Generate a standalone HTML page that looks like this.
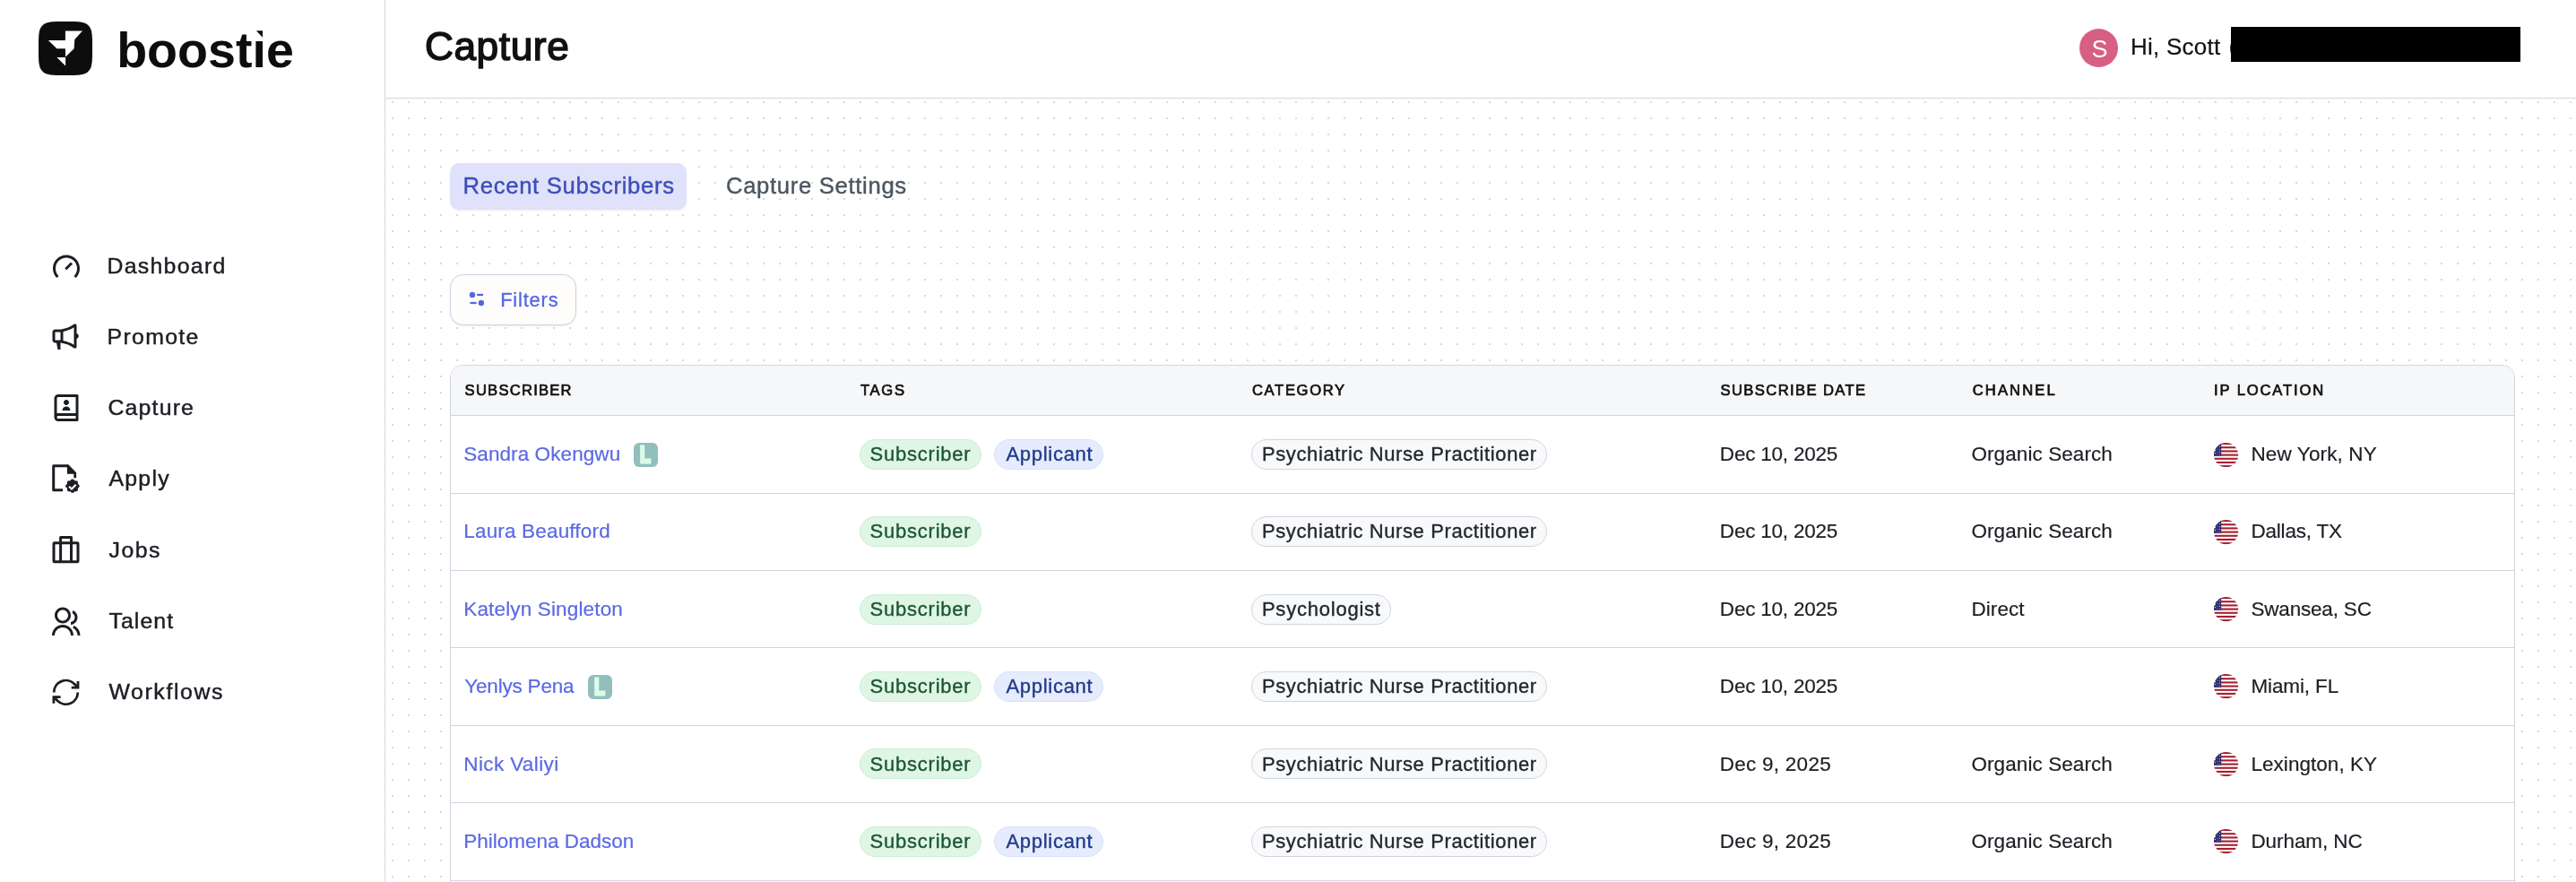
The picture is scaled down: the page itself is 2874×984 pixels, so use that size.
<!DOCTYPE html>
<html lang="en">
<head>
<meta charset="utf-8">
<title>Capture - boostie</title>
<style>
html,body{margin:0;padding:0;background:#fff;}
body{width:2874px;height:984px;overflow:hidden;position:relative;font-family:"Liberation Sans",sans-serif;}
.t{position:absolute;white-space:nowrap;line-height:1;display:block;}
svg{position:absolute;overflow:visible;}
#dots{left:430px;top:110px;}
#sidebar{position:absolute;left:0;top:0;width:429px;height:984px;background:#fff;border-right:1px solid #d6d8df;}
#header{position:absolute;left:430px;top:0;width:2444px;height:109px;background:#fff;border-bottom:1px solid #d4d7de;}
#avatar{position:absolute;left:2320px;top:32px;width:43px;height:43px;border-radius:50%;background:#d65f82;}
#redact{position:absolute;left:2489px;top:30px;width:323px;height:39px;background:#000;}
#tab1{position:absolute;left:502px;top:182px;width:264px;height:52px;border-radius:10.5px;background:#dfe2fa;box-shadow:0 1px 2px rgba(60,70,140,.10);}
#filters{position:absolute;left:502px;top:306px;width:139px;height:55px;border:1px solid #cdd0db;border-radius:14.5px;background:#fefdfb;box-shadow:0 1px 2px rgba(40,50,90,.08);}
#table{position:absolute;left:502px;top:407px;width:2302px;height:600px;border:1px solid #d1d5dc;border-radius:14px 14px 0 0;background:#fff;overflow:hidden;}
#thead{position:absolute;left:0;top:0;width:100%;height:55px;background:#f6f7f9;border-bottom:1px solid #d1d5dc;}
.rl{position:absolute;left:0;width:100%;height:1px;background:#d2d5dd;}
.pill{position:absolute;box-sizing:border-box;height:34px;border-radius:17px;border:1px solid;}
.pill.g{background:#dff6e4;border-color:#ccefd5;}
.pill.b{background:#e6ecfd;border-color:#d6e1fb;}
.pill.c{background:#f8f9fb;border-color:#d2d5dc;}
.lb{position:absolute;width:27px;height:27px;border-radius:6px;background:#92bfbd;}
</style>
</head>
<body>
<div id="layer" style="position:absolute;left:0;top:0;width:2874px;height:984px;will-change:transform;">
<svg width="0" height="0" style="left:-10px;top:-10px">
 <defs>
  <pattern id="dp" x="7" y="3" width="18" height="18" patternUnits="userSpaceOnUse"><rect x="0" y="0" width="2" height="2" fill="#d6d8e0"/></pattern>
  <clipPath id="fc"><circle cx="13.6" cy="13.6" r="13.6"/></clipPath>
  <g id="us" clip-path="url(#fc)">
   <rect width="27.2" height="27.2" fill="#fff"/>
   <g fill="#a51f30">
    <rect y="0" width="28" height="2.09"/><rect y="4.18" width="28" height="2.09"/><rect y="8.37" width="28" height="2.09"/>
    <rect y="12.55" width="28" height="2.09"/><rect y="16.74" width="28" height="2.09"/><rect y="20.92" width="28" height="2.09"/><rect y="25.1" width="28" height="2.1"/>
   </g>
   <rect width="8.2" height="14.8" fill="#2b2f6c"/>
   <g fill="#fff"><circle cx="6.3" cy="1.6" r=".55"/><circle cx="3.3" cy="4.2" r=".5"/><circle cx="6.3" cy="4.6" r=".5"/><circle cx="1.5" cy="8.6" r=".55"/><circle cx="4" cy="7" r=".45"/><circle cx="6.4" cy="7.7" r=".5"/><circle cx="1.6" cy="11.6" r=".55"/><circle cx="4" cy="10.2" r=".45"/><circle cx="6.4" cy="10.6" r=".5"/><circle cx="4" cy="13" r=".45"/><circle cx="6.4" cy="13.2" r=".45"/></g>
  </g>
 </defs>
</svg>

<main>
<svg id="dots" width="2444" height="874"><rect width="2444" height="874" fill="url(#dp)"/></svg>
<div id="tab1"></div>
<div id="filters"></div>
<svg style="left:520px;top:322px" width="24" height="24" viewBox="520 322 24 24" fill="#5466e2"><circle cx="527" cy="329" r="3.2"/><rect x="532.1" y="327.8" width="6.9" height="2.2"/><rect x="524.5" y="336.9" width="7.2" height="2.2"/><circle cx="536.9" cy="338" r="3.2"/></svg>
<span class="t" style="left:516.55px;top:195.00px;font-size:25.7px;letter-spacing:0.664px;color:#3f4db8;-webkit-text-stroke:0.4px #3f4db8;">Recent Subscribers</span>
<span class="t" style="left:809.95px;top:195.00px;font-size:25.7px;letter-spacing:0.660px;color:#4b5560;-webkit-text-stroke:0.4px #4b5560;">Capture Settings</span>
<span class="t" style="left:558.20px;top:324.00px;font-size:21.9px;letter-spacing:0.809px;color:#5466e2;-webkit-text-stroke:0.3px #5466e2;">Filters</span>
<div id="table"><div id="thead"></div>
<div class="rl" style="top:142px"></div><div class="rl" style="top:228px"></div><div class="rl" style="top:314px"></div><div class="rl" style="top:401px"></div><div class="rl" style="top:487px"></div><div class="rl" style="top:574px"></div>
</div>
<div class="lb" style="left:707.0px;top:494.0px"></div>
<div class="pill g" style="left:959px;top:489.8px;width:136px"></div>
<div class="pill b" style="left:1109px;top:489.8px;width:122px"></div>
<div class="pill c" style="left:1396px;top:489.8px;width:330.1px"></div>
<svg class="flag" style="left:2470px; top:493.9px" width="27.2" height="27.2" viewBox="0 0 27.2 27.2"><use href="#us"/></svg>
<div class="pill g" style="left:959px;top:576.2px;width:136px"></div>
<div class="pill c" style="left:1396px;top:576.2px;width:330.1px"></div>
<svg class="flag" style="left:2470px; top:579.9px" width="27.2" height="27.2" viewBox="0 0 27.2 27.2"><use href="#us"/></svg>
<div class="pill g" style="left:959px;top:662.6px;width:136px"></div>
<div class="pill c" style="left:1396px;top:662.6px;width:156.1px"></div>
<svg class="flag" style="left:2470px; top:665.9px" width="27.2" height="27.2" viewBox="0 0 27.2 27.2"><use href="#us"/></svg>
<div class="lb" style="left:656.0px;top:753.2px"></div>
<div class="pill g" style="left:959px;top:749.0px;width:136px"></div>
<div class="pill b" style="left:1109px;top:749.0px;width:122px"></div>
<div class="pill c" style="left:1396px;top:749.0px;width:330.1px"></div>
<svg class="flag" style="left:2470px; top:751.9px" width="27.2" height="27.2" viewBox="0 0 27.2 27.2"><use href="#us"/></svg>
<div class="pill g" style="left:959px;top:835.4px;width:136px"></div>
<div class="pill c" style="left:1396px;top:835.4px;width:330.1px"></div>
<svg class="flag" style="left:2470px; top:838.9px" width="27.2" height="27.2" viewBox="0 0 27.2 27.2"><use href="#us"/></svg>
<div class="pill g" style="left:959px;top:921.8px;width:136px"></div>
<div class="pill b" style="left:1109px;top:921.8px;width:122px"></div>
<div class="pill c" style="left:1396px;top:921.8px;width:330.1px"></div>
<svg class="flag" style="left:2470px; top:924.9px" width="27.2" height="27.2" viewBox="0 0 27.2 27.2"><use href="#us"/></svg>
<span class="t" style="left:518.60px;top:428.00px;font-size:16.6px;letter-spacing:1.233px;color:#111111;-webkit-text-stroke:0.7px #111;">SUBSCRIBER</span>
<span class="t" style="left:960.00px;top:428.00px;font-size:16.6px;letter-spacing:1.674px;color:#111111;-webkit-text-stroke:0.7px #111;">TAGS</span>
<span class="t" style="left:1397.00px;top:428.00px;font-size:16.6px;letter-spacing:1.640px;color:#111111;-webkit-text-stroke:0.7px #111;">CATEGORY</span>
<span class="t" style="left:1919.50px;top:428.00px;font-size:16.6px;letter-spacing:1.395px;color:#111111;-webkit-text-stroke:0.7px #111;">SUBSCRIBE DATE</span>
<span class="t" style="left:2200.70px;top:428.00px;font-size:16.6px;letter-spacing:2.122px;color:#111111;-webkit-text-stroke:0.7px #111;">CHANNEL</span>
<span class="t" style="left:2470.10px;top:428.00px;font-size:16.6px;letter-spacing:1.860px;color:#111111;-webkit-text-stroke:0.7px #111;">IP LOCATION</span>
<span class="t" style="left:517.25px;top:496.00px;font-size:22.5px;letter-spacing:0.081px;color:#5b69e3;-webkit-text-stroke:0.2px #5b69e3;">Sandra Okengwu</span>
<span class="t" style="left:713.90px;top:495.00px;font-size:25.7px;letter-spacing:0.000px;color:#dcfce7;font-weight:700;transform:scaleX(0.753);transform-origin:-0.50px 50%;-webkit-text-stroke:3px #dcfce7;">L</span>
<span class="t" style="left:970.54px;top:496.00px;font-size:22.0px;letter-spacing:0.777px;color:#1e5734;-webkit-text-stroke:0.38px #1e5734;">Subscriber</span>
<span class="t" style="left:1122.44px;top:496.00px;font-size:22.0px;letter-spacing:0.716px;color:#223c8a;-webkit-text-stroke:0.38px #223c8a;">Applicant</span>
<span class="t" style="left:1407.93px;top:496.00px;font-size:22.0px;letter-spacing:0.611px;color:#23272e;-webkit-text-stroke:0.36px #23272e;">Psychiatric Nurse Practitioner</span>
<span class="t" style="left:1918.85px;top:496.00px;font-size:22.5px;letter-spacing:-0.212px;color:#1c1f24;-webkit-text-stroke:0.2px #1c1f24;">Dec 10, 2025</span>
<span class="t" style="left:2199.45px;top:496.00px;font-size:22.5px;letter-spacing:0.084px;color:#1c1f24;-webkit-text-stroke:0.2px #1c1f24;">Organic Search</span>
<span class="t" style="left:2511.45px;top:496.00px;font-size:22.5px;letter-spacing:0.135px;color:#1c1f24;-webkit-text-stroke:0.2px #1c1f24;">New York, NY</span>
<span class="t" style="left:517.25px;top:582.00px;font-size:22.5px;letter-spacing:0.175px;color:#5b69e3;-webkit-text-stroke:0.2px #5b69e3;">Laura Beaufford</span>
<span class="t" style="left:970.54px;top:582.00px;font-size:22.0px;letter-spacing:0.777px;color:#1e5734;-webkit-text-stroke:0.38px #1e5734;">Subscriber</span>
<span class="t" style="left:1407.93px;top:582.00px;font-size:22.0px;letter-spacing:0.611px;color:#23272e;-webkit-text-stroke:0.36px #23272e;">Psychiatric Nurse Practitioner</span>
<span class="t" style="left:1918.85px;top:582.00px;font-size:22.5px;letter-spacing:-0.212px;color:#1c1f24;-webkit-text-stroke:0.2px #1c1f24;">Dec 10, 2025</span>
<span class="t" style="left:2199.45px;top:582.00px;font-size:22.5px;letter-spacing:0.084px;color:#1c1f24;-webkit-text-stroke:0.2px #1c1f24;">Organic Search</span>
<span class="t" style="left:2511.45px;top:582.00px;font-size:22.5px;letter-spacing:-0.197px;color:#1c1f24;-webkit-text-stroke:0.2px #1c1f24;">Dallas, TX</span>
<span class="t" style="left:517.25px;top:669.00px;font-size:22.5px;letter-spacing:0.156px;color:#5b69e3;-webkit-text-stroke:0.2px #5b69e3;">Katelyn Singleton</span>
<span class="t" style="left:970.54px;top:669.00px;font-size:22.0px;letter-spacing:0.777px;color:#1e5734;-webkit-text-stroke:0.38px #1e5734;">Subscriber</span>
<span class="t" style="left:1407.93px;top:669.00px;font-size:22.0px;letter-spacing:0.777px;color:#23272e;-webkit-text-stroke:0.36px #23272e;">Psychologist</span>
<span class="t" style="left:1918.85px;top:669.00px;font-size:22.5px;letter-spacing:-0.212px;color:#1c1f24;-webkit-text-stroke:0.2px #1c1f24;">Dec 10, 2025</span>
<span class="t" style="left:2199.45px;top:669.00px;font-size:22.5px;letter-spacing:0.079px;color:#1c1f24;-webkit-text-stroke:0.2px #1c1f24;">Direct</span>
<span class="t" style="left:2511.45px;top:669.00px;font-size:22.5px;letter-spacing:-0.187px;color:#1c1f24;-webkit-text-stroke:0.2px #1c1f24;">Swansea, SC</span>
<span class="t" style="left:518.25px;top:755.00px;font-size:22.5px;letter-spacing:-0.195px;color:#5b69e3;-webkit-text-stroke:0.2px #5b69e3;">Yenlys Pena</span>
<span class="t" style="left:662.90px;top:754.00px;font-size:25.7px;letter-spacing:0.000px;color:#dcfce7;font-weight:700;transform:scaleX(0.753);transform-origin:-0.50px 50%;-webkit-text-stroke:3px #dcfce7;">L</span>
<span class="t" style="left:970.54px;top:755.00px;font-size:22.0px;letter-spacing:0.777px;color:#1e5734;-webkit-text-stroke:0.38px #1e5734;">Subscriber</span>
<span class="t" style="left:1122.44px;top:755.00px;font-size:22.0px;letter-spacing:0.716px;color:#223c8a;-webkit-text-stroke:0.38px #223c8a;">Applicant</span>
<span class="t" style="left:1407.93px;top:755.00px;font-size:22.0px;letter-spacing:0.611px;color:#23272e;-webkit-text-stroke:0.36px #23272e;">Psychiatric Nurse Practitioner</span>
<span class="t" style="left:1918.85px;top:755.00px;font-size:22.5px;letter-spacing:-0.212px;color:#1c1f24;-webkit-text-stroke:0.2px #1c1f24;">Dec 10, 2025</span>
<span class="t" style="left:2511.45px;top:755.00px;font-size:22.5px;letter-spacing:-0.130px;color:#1c1f24;-webkit-text-stroke:0.2px #1c1f24;">Miami, FL</span>
<span class="t" style="left:517.25px;top:842.00px;font-size:22.5px;letter-spacing:0.380px;color:#5b69e3;-webkit-text-stroke:0.2px #5b69e3;">Nick Valiyi</span>
<span class="t" style="left:970.54px;top:842.00px;font-size:22.0px;letter-spacing:0.777px;color:#1e5734;-webkit-text-stroke:0.38px #1e5734;">Subscriber</span>
<span class="t" style="left:1407.93px;top:842.00px;font-size:22.0px;letter-spacing:0.611px;color:#23272e;-webkit-text-stroke:0.36px #23272e;">Psychiatric Nurse Practitioner</span>
<span class="t" style="left:1918.85px;top:842.00px;font-size:22.5px;letter-spacing:0.248px;color:#1c1f24;-webkit-text-stroke:0.2px #1c1f24;">Dec 9, 2025</span>
<span class="t" style="left:2199.45px;top:842.00px;font-size:22.5px;letter-spacing:0.084px;color:#1c1f24;-webkit-text-stroke:0.2px #1c1f24;">Organic Search</span>
<span class="t" style="left:2511.45px;top:842.00px;font-size:22.5px;letter-spacing:0.042px;color:#1c1f24;-webkit-text-stroke:0.2px #1c1f24;">Lexington, KY</span>
<span class="t" style="left:517.25px;top:928.00px;font-size:22.5px;letter-spacing:-0.000px;color:#5b69e3;-webkit-text-stroke:0.2px #5b69e3;">Philomena Dadson</span>
<span class="t" style="left:970.54px;top:928.00px;font-size:22.0px;letter-spacing:0.777px;color:#1e5734;-webkit-text-stroke:0.38px #1e5734;">Subscriber</span>
<span class="t" style="left:1122.44px;top:928.00px;font-size:22.0px;letter-spacing:0.716px;color:#223c8a;-webkit-text-stroke:0.38px #223c8a;">Applicant</span>
<span class="t" style="left:1407.93px;top:928.00px;font-size:22.0px;letter-spacing:0.611px;color:#23272e;-webkit-text-stroke:0.36px #23272e;">Psychiatric Nurse Practitioner</span>
<span class="t" style="left:1918.85px;top:928.00px;font-size:22.5px;letter-spacing:0.248px;color:#1c1f24;-webkit-text-stroke:0.2px #1c1f24;">Dec 9, 2025</span>
<span class="t" style="left:2199.45px;top:928.00px;font-size:22.5px;letter-spacing:0.084px;color:#1c1f24;-webkit-text-stroke:0.2px #1c1f24;">Organic Search</span>
<span class="t" style="left:2511.45px;top:928.00px;font-size:22.5px;letter-spacing:-0.075px;color:#1c1f24;-webkit-text-stroke:0.2px #1c1f24;">Durham, NC</span>
</main>

<header id="header"></header>
<div id="avatar"></div>
<span class="t" style="left:2333.5px;top:41.5px;font-size:27px;color:#fff;">S</span>
<span class="t" style="left:2486.5px;top:38.6px;font-size:26px;color:#111;">(</span>
<div id="redact"></div>
<span class="t" style="left:473.90px;top:30.00px;font-size:44.2px;letter-spacing:0.612px;color:#111111;-webkit-text-stroke:1.5px #111;">Capture</span>
<span class="t" style="left:2376.95px;top:39.00px;font-size:26.0px;letter-spacing:0.259px;color:#111111;-webkit-text-stroke:0.2px #111;">Hi, Scott</span>

<aside id="sidebar"></aside>
<svg style="left:42.7px;top:24.2px" width="60" height="60" viewBox="0 0 60 60">
 <path d="M60.0 30.0L60.0 37.8L59.9 40.7L59.8 42.9L59.7 44.7L59.5 46.2L59.3 47.6L59.1 48.8L58.8 49.9L58.5 51.0L58.1 51.9L57.7 52.8L57.2 53.6L56.8 54.3L56.2 55.0L55.6 55.6L55.0 56.2L54.3 56.8L53.6 57.2L52.8 57.7L51.9 58.1L51.0 58.5L49.9 58.8L48.8 59.1L47.6 59.3L46.2 59.5L44.7 59.7L42.9 59.8L40.7 59.9L37.8 60.0L30.0 60.0L22.2 60.0L19.3 59.9L17.1 59.8L15.3 59.7L13.8 59.5L12.4 59.3L11.2 59.1L10.1 58.8L9.0 58.5L8.1 58.1L7.2 57.7L6.4 57.2L5.7 56.8L5.0 56.2L4.4 55.6L3.8 55.0L3.2 54.3L2.8 53.6L2.3 52.8L1.9 51.9L1.5 51.0L1.2 49.9L0.9 48.8L0.7 47.6L0.5 46.2L0.3 44.7L0.2 42.9L0.1 40.7L0.0 37.8L0.0 30.0L0.0 22.2L0.1 19.3L0.2 17.1L0.3 15.3L0.5 13.8L0.7 12.4L0.9 11.2L1.2 10.1L1.5 9.0L1.9 8.1L2.3 7.2L2.8 6.4L3.2 5.7L3.8 5.0L4.4 4.4L5.0 3.8L5.7 3.2L6.4 2.8L7.2 2.3L8.1 1.9L9.0 1.5L10.1 1.2L11.2 0.9L12.4 0.7L13.8 0.5L15.3 0.3L17.1 0.2L19.3 0.1L22.2 0.0L30.0 0.0L37.8 0.0L40.7 0.1L42.9 0.2L44.7 0.3L46.2 0.5L47.6 0.7L48.8 0.9L49.9 1.2L51.0 1.5L51.9 1.9L52.8 2.3L53.6 2.8L54.3 3.2L55.0 3.8L55.6 4.4L56.2 5.0L56.8 5.7L57.2 6.4L57.7 7.2L58.1 8.1L58.5 9.0L58.8 10.1L59.1 11.2L59.3 12.4L59.5 13.8L59.7 15.3L59.8 17.1L59.9 19.3L60.0 22.2Z" fill="#0d0d0d"/>
 <path d="M29.9 10.5H49L40.3 19.9L39.6 30.3L30.1 39.5L29.9 30.3H20.4L10.9 20.9H29.9Z M20.4 40.1H30.1V49.5Z" fill="#fff"/>
</svg>
<!-- nav icons -->
<svg style="left:55.5px;top:279.7px" width="36" height="36" viewBox="0 0 24 24" fill="#1b1e23"><path d="M20 13C20 15.2091 19.1046 17.2091 17.6569 18.6569L19.0711 20.0711C20.8807 18.2614 22 15.7614 22 13C22 7.47715 17.5228 3 12 3C6.47715 3 2 7.47715 2 13C2 15.7614 3.11929 18.2614 4.92893 20.0711L6.34315 18.6569C4.89543 17.2091 4 15.2091 4 13C4 8.58172 7.58172 5 12 5C16.4183 5 20 8.58172 20 13ZM15.293 8.29297L10.793 12.793L12.2072 14.2072L16.7072 9.70718L15.293 8.29297Z"/></svg>
<svg style="left:54px;top:357.4px" width="36" height="36" viewBox="0 0 24 24" fill="#1b1e23"><path d="M9 17C9 17 16 18 19 21H20C20.5523 21 21 20.5523 21 20V13.937C21.8626 13.715 22.5 12.9319 22.5 12C22.5 11.0681 21.8626 10.285 21 10.063V4C21 3.44772 20.5523 3 20 3H19C16 6 9 7 9 7H5C3.89543 7 3 7.89543 3 9V15C3 16.1046 3.89543 17 5 17H6L7 22H9V17ZM11 8.6612C11.6833 8.5146 12.5275 8.31193 13.4393 8.04373C15.1175 7.55014 17.25 6.77262 19 5.57458V18.4254C17.25 17.2274 15.1175 16.4499 13.4393 15.9563C12.5275 15.6881 11.6833 15.4854 11 15.3388V8.6612ZM5 9H9V15H5V9Z"/></svg>
<svg style="left:55.5px;top:437.2px" width="36" height="36" viewBox="0 0 24 24" fill="#1b1e23"><path d="M20 22H6C4.34315 22 3 20.6569 3 19V5C3 3.34315 4.34315 2 6 2H20C20.5523 2 21 2.44772 21 3V21C21 21.5523 20.5523 22 20 22ZM19 20V18H6C5.44772 18 5 18.4477 5 19C5 19.5523 5.44772 20 6 20H19ZM5 16.1707C5.31278 16.0602 5.64936 16 6 16H19V4H6C5.44772 4 5 4.44772 5 5V16.1707ZM12 10C10.8954 10 10 9.10457 10 8C10 6.89543 10.8954 6 12 6C13.1046 6 14 6.89543 14 8C14 9.10457 13.1046 10 12 10ZM9 14C9 12.3431 10.3431 11 12 11C13.6569 11 15 12.3431 15 14H9Z"/></svg>
<!-- apply -->
<svg style="left:48px;top:510px" width="50" height="50" viewBox="0 0 50 50" fill="#1b1e23">
 <path d="M22.1 36.8H11.7V9.7H28" fill="none" stroke="#1b1e23" stroke-width="3" stroke-linejoin="round"/>
 <path d="M26.9 8.2H28.3L37.1 17.3V23.2H34.3V18.7H26.9Z"/>
 <g transform="translate(32.9,32.3)"><circle r="6.4"/><circle cx="0" cy="-5.3" r="2.4"/><circle cx="3.75" cy="-3.75" r="2.4"/><circle cx="5.3" cy="0" r="2.4"/><circle cx="3.75" cy="3.75" r="2.4"/><circle cx="0" cy="5.3" r="2.4"/><circle cx="-3.75" cy="3.75" r="2.4"/><circle cx="-5.3" cy="0" r="2.4"/><circle cx="-3.75" cy="-3.75" r="2.4"/>
 <path d="M-3.9 0.4L-0.9 3.2L3.8 -1.5" fill="none" stroke="#fff" stroke-width="2.1"/></g>
</svg>
<!-- jobs -->
<svg style="left:48px;top:590px" width="50" height="50" viewBox="0 0 50 50" fill="none" stroke="#1b1e23" stroke-width="3" stroke-linejoin="round">
 <rect x="12" y="15.7" width="27" height="21.1" rx="0.8"/>
 <path d="M19.6 36.8V9.4H31.5V36.8"/>
</svg>
<!-- talent -->
<svg style="left:54.9px;top:676px" width="36" height="36" viewBox="0 0 24 24" fill="#1b1e23"><path d="M2 22C2 17.5817 5.58172 14 10 14C14.4183 14 18 17.5817 18 22H16C16 18.6863 13.3137 16 10 16C6.68629 16 4 18.6863 4 22H2ZM10 13C6.685 13 4 10.315 4 7C4 3.685 6.685 1 10 1C13.315 1 16 3.685 16 7C16 10.315 13.315 13 10 13ZM10 11C12.21 11 14 9.21 14 7C14 4.79 12.21 3 10 3C7.79 3 6 4.79 6 7C6 9.21 7.79 11 10 11ZM18.2837 14.7028C21.0644 15.9561 23 18.752 23 22H21C21 19.564 19.5483 17.4671 17.4628 16.5271L18.2837 14.7028ZM17.5962 3.41321C19.5944 4.23703 21 6.20361 21 8.5C21 11.3702 18.8042 13.7252 16 13.9776V11.9646C17.6967 11.7222 19 10.264 19 8.5C19 7.11935 18.2016 5.92603 17.041 5.35635L17.5962 3.41321Z"/></svg>
<!-- workflows -->
<svg style="left:48px;top:748px" width="50" height="50" viewBox="0 0 50 50" fill="none" stroke="#1b1e23" stroke-width="2.8">
 <path d="M12.2 24.4A13.3 13.3 0 0 1 34.9 15L39 19.1"/><path d="M39 11.9V19.1H31.7"/>
 <path d="M38.8 24.4A13.3 13.3 0 0 1 16.1 33.8L11.9 29.6"/><path d="M11.9 36.8V29.6H19.6"/>
</svg>
<span class="t" style="left:130.15px;top:29.00px;font-size:55.6px;letter-spacing:0.024px;color:#0d0d0d;font-weight:700;">boostie</span>
<span class="t" style="left:119.47px;top:285.00px;font-size:24.8px;letter-spacing:1.317px;color:#1b1e23;-webkit-text-stroke:0.45px #1b1e23;">Dashboard</span>
<span class="t" style="left:119.47px;top:364.00px;font-size:24.8px;letter-spacing:1.371px;color:#1b1e23;-webkit-text-stroke:0.45px #1b1e23;">Promote</span>
<span class="t" style="left:120.47px;top:443.00px;font-size:24.8px;letter-spacing:1.204px;color:#1b1e23;-webkit-text-stroke:0.45px #1b1e23;">Capture</span>
<span class="t" style="left:121.47px;top:522.00px;font-size:24.8px;letter-spacing:1.280px;color:#1b1e23;-webkit-text-stroke:0.45px #1b1e23;">Apply</span>
<span class="t" style="left:121.47px;top:602.00px;font-size:24.8px;letter-spacing:1.523px;color:#1b1e23;-webkit-text-stroke:0.45px #1b1e23;">Jobs</span>
<span class="t" style="left:121.47px;top:681.00px;font-size:24.8px;letter-spacing:1.094px;color:#1b1e23;-webkit-text-stroke:0.45px #1b1e23;">Talent</span>
<span class="t" style="left:121.47px;top:760.00px;font-size:24.8px;letter-spacing:1.631px;color:#1b1e23;-webkit-text-stroke:0.45px #1b1e23;">Workflows</span>
<svg style="left:284px;top:32px" width="12" height="12" viewBox="284 32 12 12"><rect x="285" y="33.5" width="9" height="8" fill="#fff"/><path d="M285.9 34.2H293V41.8Z" fill="#0d0d0d"/></svg>
</div>
</body>
</html>
